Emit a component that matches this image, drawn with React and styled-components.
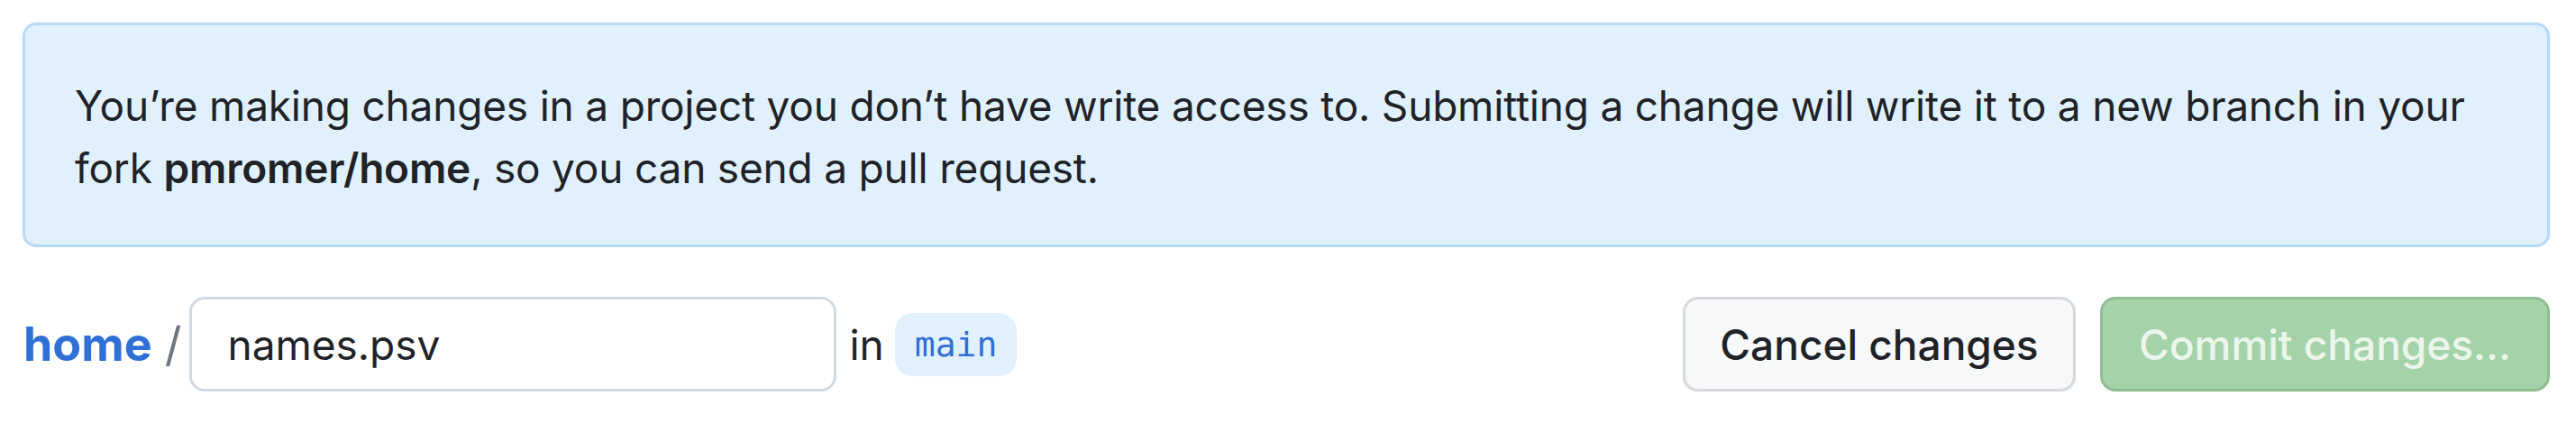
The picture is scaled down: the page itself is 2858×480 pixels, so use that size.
import React from "react";
import styled, { createGlobalStyle } from "styled-components";

const GlobalStyle = createGlobalStyle`
  body {
    margin: 0;
    background: #ffffff;
    font-family: Inter, "Noto Sans", "Liberation Sans", sans-serif;
    color: #1f2328;
  }
`;

const App = () => {
  return (
    <>
      <GlobalStyle />
      <Page>
        <Flash>
          You’re making changes in a project you don’t have write access to.
          Submitting a change will write it to a new branch in your fork{" "}
          <strong>pmromer/home</strong>, so you can send a pull request.
        </Flash>
        <Toolbar>
          <Breadcrumb>
            <RepoLink href="#">home</RepoLink>
            <Separator>/</Separator>
            <FileInput defaultValue="names.psv" aria-label="File name" />
            <InLabel>in</InLabel>
            <BranchBadge>main</BranchBadge>
          </Breadcrumb>
          <Actions>
            <Button $width={436}>Cancel changes</Button>
            <Button $width={499} $primary disabled>
              Commit changes...
            </Button>
          </Actions>
        </Toolbar>
      </Page>
    </>
  );
};
export default App;

const Page = styled.div`
  padding: 25px 29px 0 25px;
`;

const Flash = styled.div`
  background-color: #e0f1fd;
  border: 3px solid #b6d9f7;
  border-radius: 15px;
  padding: 55px 55px 50px;
  font-size: 46px;
  line-height: 69px;
  letter-spacing: -0.2px;
  color: #1f2328;

  strong {
    font-weight: 600;
  }
`;

const Toolbar = styled.div`
  display: flex;
  align-items: center;
  margin-top: 55px;
`;

const Breadcrumb = styled.div`
  display: flex;
  align-items: center;
  font-size: 46px;
`;

const RepoLink = styled.a`
  margin-left: 1px;
  font-size: 52px;
  font-weight: 700;
  color: #2f6fd6;
  text-decoration: none;
`;

const Separator = styled.span`
  margin: 0 9px 0 14px;
  font-size: 52px;
  color: #6e7781;
`;

const FileInput = styled.input`
  box-sizing: border-box;
  width: 718px;
  height: 105px;
  padding: 0 39px;
  font-family: inherit;
  font-size: 46px;
  color: #1f2328;
  background: #ffffff;
  border: 3px solid #d1d9e0;
  border-radius: 17px;
  outline: none;
`;

const InLabel = styled.span`
  margin: 0 12px 0 14px;
  color: #1f2328;
`;

const BranchBadge = styled.span`
  display: inline-flex;
  align-items: center;
  height: 70px;
  padding: 0 22px;
  border-radius: 20px;
  background-color: #e0f1fd;
  color: #2f6fd6;
  font-family: "DejaVu Sans Mono", "Liberation Mono", monospace;
  font-size: 38px;
`;

const Actions = styled.div`
  display: flex;
  align-items: center;
  gap: 27px;
  margin-left: auto;
`;

const Button = styled.button`
  box-sizing: border-box;
  width: ${(p) => p.$width}px;
  height: 105px;
  padding: 0;
  font-family: inherit;
  font-size: 46px;
  font-weight: 500;
  border-radius: 17px;
  border: 3px solid ${(p) => (p.$primary ? "#8fbc92" : "#d5d8dc")};
  background-color: ${(p) => (p.$primary ? "#a5d3a9" : "#f6f8fa")};
  color: ${(p) => (p.$primary ? "rgba(255, 255, 255, 0.8)" : "#1f2328")};
  box-shadow: ${(p) => (p.$primary ? "none" : "0 3px 0 rgba(31, 35, 40, 0.04)")};
  cursor: ${(p) => (p.$primary ? "not-allowed" : "pointer")};
`;
